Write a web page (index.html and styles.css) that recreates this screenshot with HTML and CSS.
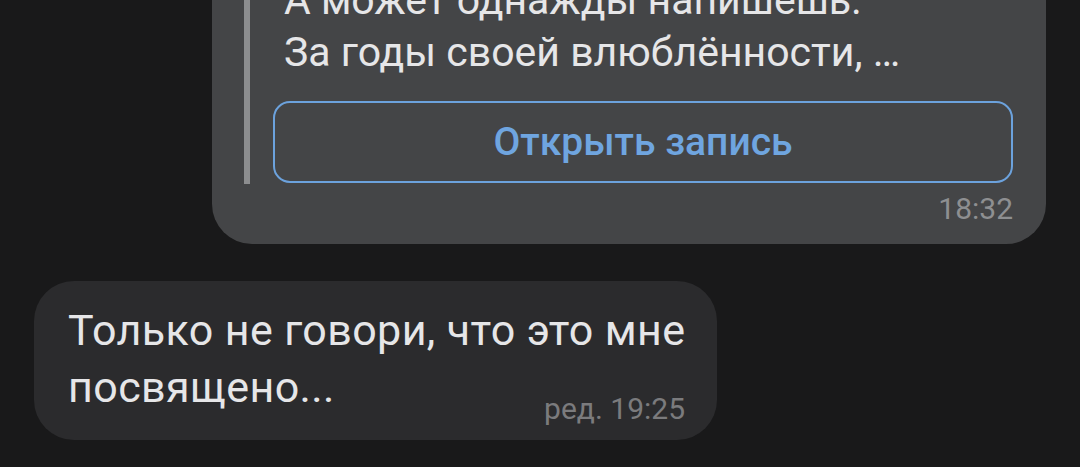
FILE: index.html
```html
<!DOCTYPE html>
<html lang="ru">
<head>
  <meta charset="UTF-8" />
  <meta name="viewport" content="width=device-width, initial-scale=1.0" />
  <title>Чат</title>
  <link rel="stylesheet" href="styles.css">
</head>
<body>
  <div class="chat">
    <div class="bubble bubble-out">
      <div class="quote">
        <div class="quote-bar"></div>
        <div class="quote-body">
          <p class="quote-text">А может однажды напишешь.<br>За годы своей влюблённости, …</p>
          <button class="open-btn">Открыть запись</button>
        </div>
      </div>
      <div class="meta">18:32</div>
    </div>

    <div class="bubble bubble-in">
      <p class="msg-text">Только не говори, что это мне<br>посвящено...</p>
      <div class="meta meta-in">ред. 19:25</div>
    </div>
  </div>
</body>
</html>
```

FILE: styles.css
```css
body {
  margin: 0;
  background: #19191a;
  font-family: Roboto, "Noto Sans", sans-serif;
  overflow: hidden;
  height: 467px;
}

.chat {
  display: flex;
  flex-direction: column;
  margin-top: -46px;
}

.bubble {
  border-radius: 40px;
  box-sizing: border-box;
}

.bubble-out {
  background: #444547;
  margin-left: 212px;
  width: 834px;
  padding: 20px 33px 17px 32px;
}

.quote {
  display: flex;
}

.quote-bar {
  width: 6px;
  background: #8c8d8f;
  flex-shrink: 0;
  margin-right: 23px;
  margin-bottom: -1px;
}

.quote-body {
  flex: 1;
}

.quote-text {
  margin: 0 0 0 11px;
  color: #e6e6e8;
  font-size: 41px;
  line-height: 52px;
  padding-bottom: 23px;
  white-space: nowrap;
}

.open-btn {
  display: block;
  width: 100%;
  height: 82px;
  background: transparent;
  border: 2.5px solid #6ca2dd;
  border-radius: 17px;
  color: #6fa5e0;
  font-family: Roboto, sans-serif;
  font-weight: 500;
  font-size: 39px;
  cursor: pointer;
}

.meta {
  text-align: right;
  color: #8e8f91;
  font-size: 30px;
  line-height: 36px;
  margin-top: 8px;
}

.bubble-in {
  background: #2b2b2d;
  margin-top: 37px;
  margin-left: 34px;
  width: 683px;
  padding: 21px 32px 13px 34px;
}

.msg-text {
  margin: 0;
  color: #e6e6e8;
  font-size: 43px;
  line-height: 57px;
  letter-spacing: 0.4px;
  white-space: nowrap;
}

.meta-in {
  color: #7b7b7d;
  margin-top: -25px;
}
```
